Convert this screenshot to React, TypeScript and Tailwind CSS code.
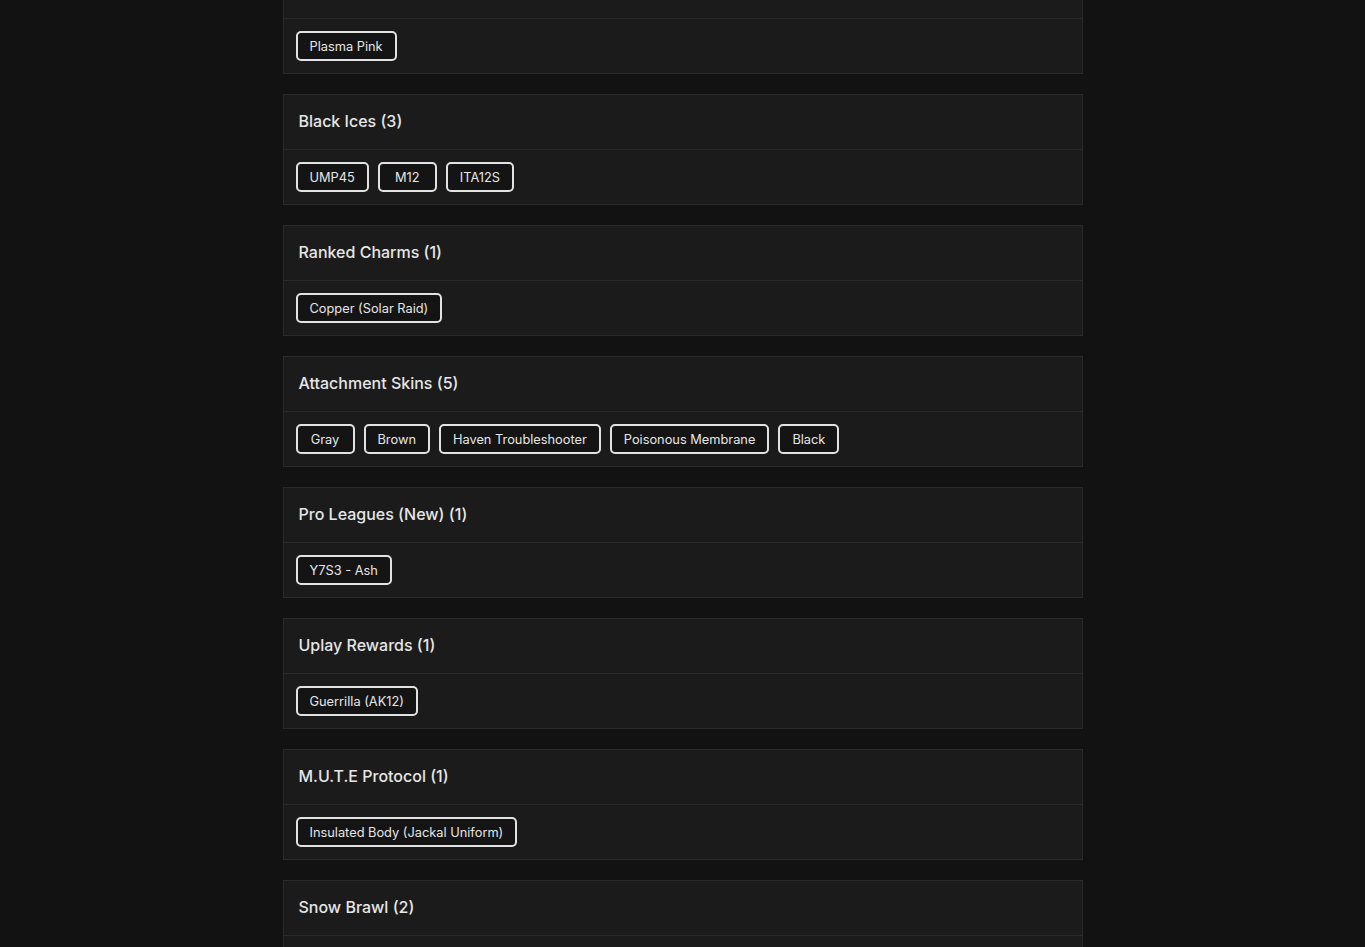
import React from "react";

const sections: { title: string; tags: string[] }[] = [
  { title: "Universal Skins (1)", tags: ["Plasma Pink"] },
  { title: "Black Ices (3)", tags: ["UMP45", "M12", "ITA12S"] },
  { title: "Ranked Charms (1)", tags: ["Copper (Solar Raid)"] },
  {
    title: "Attachment Skins (5)",
    tags: ["Gray", "Brown", "Haven Troubleshooter", "Poisonous Membrane", "Black"],
  },
  { title: "Pro Leagues (New) (1)", tags: ["Y7S3 - Ash"] },
  { title: "Uplay Rewards (1)", tags: ["Guerrilla (AK12)"] },
  { title: "M.U.T.E Protocol (1)", tags: ["Insulated Body (Jackal Uniform)"] },
  { title: "Snow Brawl (2)", tags: ["Frost Bite", "Snow Day"] },
];

export default function App() {
  return (
    <div
      className="min-h-screen bg-[#121212] overflow-hidden"
      style={{ fontFamily: "Inter, 'Open Sans', sans-serif" }}
    >
      <div className="mx-auto w-[800px] mt-[-37px] flex flex-col gap-5 pb-10">
        {sections.map((s) => (
          <div key={s.title} className="bg-[#1b1b1b] border border-[#2a2a2a]">
            <div className="h-[55px] px-[15px] pb-[2px] flex items-center border-b border-[#2a2a2a]">
              <h3 className="text-[16px] font-medium text-[#e6e6e6]">{s.title}</h3>
            </div>
            <div className="h-[54px] px-3 flex items-center gap-[9px]">
              {s.tags.map((t) => (
                <span
                  key={t}
                  className="h-[30px] min-w-[59px] px-3 pt-[2px] flex items-center justify-center rounded-[5px] border-2 border-[#e2e2e2] bg-[#141414] text-[12.8px] text-[#e6e6e6]"
                >
                  {t}
                </span>
              ))}
            </div>
          </div>
        ))}
      </div>
    </div>
  );
}
